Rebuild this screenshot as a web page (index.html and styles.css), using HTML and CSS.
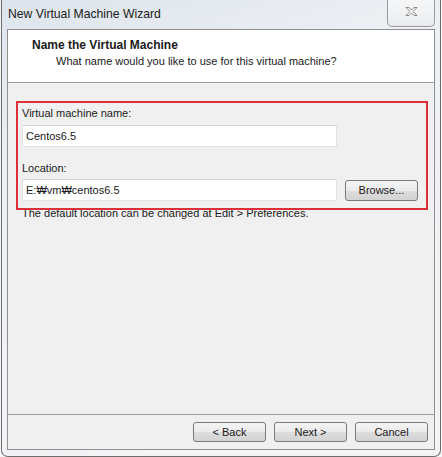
FILE: index.html
```html
<!DOCTYPE html>
<html lang="en">
	<head>
		<meta charset="UTF-8" />
		<title>New Virtual Machine Wizard</title>
		<link rel="stylesheet" href="styles.css">
	</head>
	<body>
		<div class="window">
			<div class="titlebar">
				<span class="title">New Virtual Machine Wizard</span>
				<div class="close">
					<svg width="13" height="11" viewBox="0 0 13 11">
						<path d="M1 1.5h3l2.5 2.5 2.5-2.5h3l-4 4 4 4h-3l-2.5-2.5-2.5 2.5h-3l4-4z" fill="#fafafa" stroke="#8a8a8a" stroke-width="1" stroke-linejoin="round" />
					</svg>
				</div>
			</div>

			<div class="client">
				<!-- wizard header -->
				<div class="header">
					<div class="head-title">Name the Virtual Machine</div>
					<div class="head-sub">What name would you like to use for this virtual machine?</div>
				</div>

				<!-- page content -->
				<div class="page">
					<div class="field-label">Virtual machine name:</div>
					<div class="row">
						<div class="input">Centos6.5</div>
					</div>
					<div class="field-label second">Location:</div>
					<div class="row">
						<div class="input">E:₩vm₩centos6.5</div>
						<button class="btn browse">Browse...</button>
					</div>
					<div class="hint">The default location can be changed at Edit &gt; Preferences.</div>
					<div class="mark"></div>
				</div>

				<!-- buttons -->
				<div class="footer">
					<button class="btn">&lt; Back</button>
					<button class="btn">Next &gt;</button>
					<button class="btn">Cancel</button>
				</div>
			</div>
		</div>
	</body>
</html>
```

FILE: styles.css
```css
html,
body {
	margin: 0;
	height: 100%;
}
body {
	background: #f3f4f6;
	font-family: "Liberation Sans", Arial, sans-serif;
	font-size: 11px;
	color: #1a1a1a;
	overflow: hidden;
}
.window {
	box-sizing: border-box;
	margin-left: 1px;
	width: 440px;
	height: 457px;
	padding: 0 5px 6px 5px;
	border: 1px solid #6e6e6e;
	border-top: none;
	border-radius: 0 0 7px 7px;
	background: linear-gradient(160deg, #dde4ec 0%, #eef1f4 30%, #f3f4f6 100%);
	display: flex;
	flex-direction: column;
}
.titlebar {
	height: 29px;
	display: flex;
	align-items: flex-start;
	justify-content: space-between;
}
.title {
	margin: 7px 0 0 1px;
	font-size: 12.2px;
	color: #222;
}
.close {
	box-sizing: border-box;
	width: 48px;
	height: 27px;
	border: 1px solid #9a9a9a;
	border-top: none;
	border-radius: 0 0 5px 5px;
	background: linear-gradient(#f6f7f8, #e9ebee);
	display: flex;
	align-items: center;
	justify-content: center;
	padding-bottom: 4px;
}
.client {
	flex: 1;
	display: flex;
	flex-direction: column;
	border: 1px solid #8f8f8f;
	background: #f0f0f0;
}
.header {
	box-sizing: border-box;
	background: #fff;
	border-bottom: 1px solid #a0a0a0;
	height: 53px;
	padding: 7px 0 0 24px;
	line-height: 16px;
}
.head-title {
	font-weight: bold;
	font-size: 12px;
}
.head-sub {
	padding-left: 24px;
}
.page {
	flex: 1;
	position: relative;
	padding: 22px 0 0 14px;
	line-height: 16px;
}
.field-label {
	margin-bottom: 4px;
}
.field-label.second {
	margin-top: 13px;
	margin-bottom: 3px;
}
.row {
	display: flex;
	align-items: center;
	gap: 8px;
}
.input {
	box-sizing: border-box;
	width: 315px;
	height: 22px;
	padding: 0 3px;
	line-height: 20px;
	background: #fff;
	border: 1px solid #e2e3e4;
	border-top-color: #d2d3d5;
}
.hint {
	margin-top: 4px;
}
.mark {
	position: absolute;
	left: 8px;
	top: 18px;
	width: 412px;
	height: 109px;
	box-sizing: border-box;
	border: 2px solid #dc3038;
}
.btn {
	box-sizing: border-box;
	width: 73px;
	height: 20px;
	padding: 0;
	font-family: inherit;
	font-size: 11px;
	color: #1a1a1a;
	border: 1px solid #7a7a7a;
	border-radius: 3px;
	background: linear-gradient(#f4f4f4 0%, #ebebeb 50%, #dddddd 51%, #d3d3d3 100%);
}
.browse {
	height: 21px;
}
.footer {
	height: 34px;
	border-top: 1px solid #a0a0a0;
	display: flex;
	align-items: center;
	justify-content: flex-end;
	gap: 8px;
	padding-right: 6px;
}
```
